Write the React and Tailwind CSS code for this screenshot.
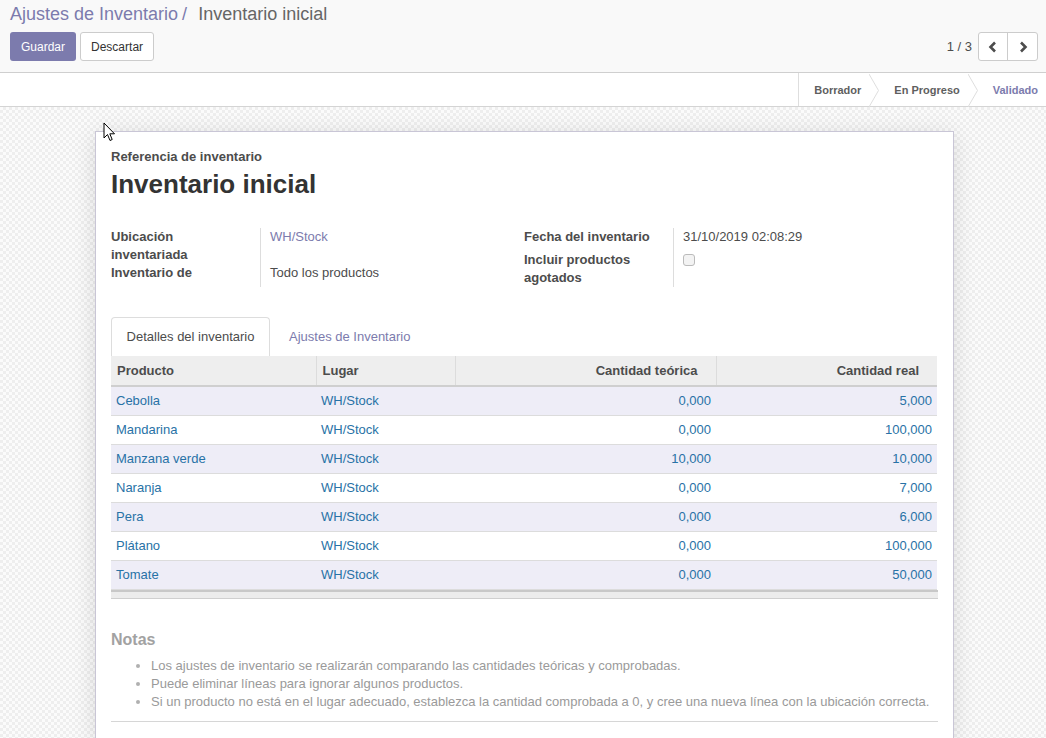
import React from "react";

const rows = [
  ["Cebolla", "WH/Stock", "0,000", "5,000"],
  ["Mandarina", "WH/Stock", "0,000", "100,000"],
  ["Manzana verde", "WH/Stock", "10,000", "10,000"],
  ["Naranja", "WH/Stock", "0,000", "7,000"],
  ["Pera", "WH/Stock", "0,000", "6,000"],
  ["Plátano", "WH/Stock", "0,000", "100,000"],
  ["Tomate", "WH/Stock", "0,000", "50,000"],
];

function Chev({ dir }) {
  return (
    <svg width="10" height="12" viewBox="0 0 10 12">
      {dir === "left" ? (
        <path d="M7 1.5 L2.5 6 L7 10.5" fill="none" stroke="#4c4c4c" strokeWidth="2.6" />
      ) : (
        <path d="M3 1.5 L7.5 6 L3 10.5" fill="none" stroke="#4c4c4c" strokeWidth="2.6" />
      )}
    </svg>
  );
}

function Sep() {
  return (
    <svg width="10" height="33" viewBox="0 0 10 33" className="shrink-0">
      <path d="M0 0 L9.5 16.5 L0 33" fill="none" stroke="#dedede" strokeWidth="1" />
    </svg>
  );
}

export default function App() {
  return (
    <div
      className="relative w-[1046px] h-[738px] overflow-hidden text-[13px] text-[#4c4c4c] flex flex-col"
      style={{ fontFamily: '"Liberation Sans", Arial, sans-serif' }}
    >
      {/* Control panel */}
      <div className="bg-[#f9f9f9] border-b border-[#cfcfcf] h-[73px] shrink-0 pl-[10px] pr-[8px] pt-[3px]">
        <div className="text-[18px] leading-[22px] flex items-center">
          <span className="text-[#7c7bad]">Ajustes de Inventario</span>
          <span className="text-[#7c7bad] ml-[4px]">/</span>
          <span className="text-[#666] ml-[11px]">Inventario inicial</span>
        </div>
        <div className="flex items-center mt-[7px]">
          <button className="h-[29px] px-[11px] rounded-[3px] bg-[#7c7bad] text-white text-[12px]">Guardar</button>
          <button className="h-[29px] px-[10px] ml-[4px] rounded-[3px] bg-white border border-[#ccc] text-[#333] text-[12px]">
            Descartar
          </button>
          <div className="flex-1" />
          <span className="text-[13px] text-[#4c4c4c] mr-[6px]">1 / 3</span>
          <div className="flex h-[29px] border border-[#ccc] rounded-[3px] bg-white">
            <div className="w-[29px] flex items-center justify-center border-r border-[#ccc]">
              <Chev dir="left" />
            </div>
            <div className="w-[29px] flex items-center justify-center">
              <Chev dir="right" />
            </div>
          </div>
        </div>
      </div>

      {/* Statusbar */}
      <div className="bg-white border-b border-[#d4d4d4] h-[34px] shrink-0 flex justify-end">
        <div className="flex items-center border-l border-[#dedede] text-[11px] font-bold h-[33px] pt-[1px]">
          <span className="pl-[15px] pr-[8px] text-[#5f5f5f]">Borrador</span>
          <Sep />
          <span className="pl-[15px] pr-[8px] text-[#5f5f5f]">En Progreso</span>
          <Sep />
          <span className="pl-[15px] pr-[8px] text-[#7c7bad]">Validado</span>
        </div>
      </div>

      {/* Content */}
      <div className="flex-1 bg-[repeating-conic-gradient(#eeeeee_0_25%,#fbfbfb_0_50%)] bg-size-[6px_6px] pt-[24px] pl-[95px]">
        <div className="w-[859px] bg-white border border-[#c9c6d6] shadow-[0_4px_22px_rgba(0,0,0,0.12)] px-[15px] pt-[16px] pb-[17px]">
          <div className="font-bold text-[13px] leading-[18px]">Referencia de inventario</div>
          <div className="font-bold text-[26px] leading-[36px] text-[#333]">Inventario inicial</div>

          {/* field groups */}
          <div className="flex mt-[26px]">
            <div className="w-[413px] flex">
              <div className="w-[150px] border-r border-[#ddd] font-bold leading-[18px]">
                <div className="h-[36px]">Ubicación<br />inventariada</div>
                <div className="h-[23px]">Inventario de</div>
              </div>
              <div className="pl-[9px] leading-[18px]">
                <div className="h-[36px] text-[#7c7bad]">WH/Stock</div>
                <div className="h-[23px]">Todo los productos</div>
              </div>
            </div>
            <div className="w-[413px] flex">
              <div className="w-[150px] border-r border-[#ddd] font-bold leading-[18px]">
                <div className="h-[23px]">Fecha del inventario</div>
                <div className="h-[36px]">Incluir productos<br />agotados</div>
              </div>
              <div className="pl-[9px] leading-[18px]">
                <div className="h-[23px]">31/10/2019 02:08:29</div>
                <div className="h-[36px] pt-[3px]">
                  <div className="w-[12px] h-[12px] rounded-[3px] border border-[#bbb] bg-[#f3f3f3]" />
                </div>
              </div>
            </div>
          </div>

          {/* tabs */}
          <div className="flex mt-[30px] h-[39px] items-end">
            <div className="h-[39px] w-[159px] border border-[#ddd] border-b-0 rounded-t-[4px] flex items-center justify-center text-[#4c4c4c]">
              Detalles del inventario
            </div>
            <div className="h-[39px] flex items-center px-[19px] text-[#7c7bad]">Ajustes de Inventario</div>
          </div>

          {/* table */}
          <table className="w-[826px] border-collapse table-fixed">
            <colgroup>
              <col className="w-[205px]" />
              <col className="w-[139px]" />
              <col className="w-[261px]" />
              <col className="w-[221px]" />
            </colgroup>
            <thead>
              <tr className="bg-[#eeeeee] h-[30px] border-b-2 border-[#cfcfcf] font-bold">
                <th className="text-left font-bold px-[6px] border-r border-[#dcdcdc]">Producto</th>
                <th className="text-left font-bold px-[6px] border-r border-[#dcdcdc]">Lugar</th>
                <th className="text-right font-bold px-[18px] border-r border-[#dcdcdc]">Cantidad teórica</th>
                <th className="text-right font-bold px-[18px]">Cantidad real</th>
              </tr>
            </thead>
            <tbody className="text-[#2872a6]">
              {rows.map((r, i) => (
                <tr key={i} className={`h-[29px] border-b border-[#dcdcdc] ${i % 2 === 0 ? "bg-[#eeedf7]" : "bg-white"}`}>
                  <td className="px-[5px]">{r[0]}</td>
                  <td className="px-[5px]">{r[1]}</td>
                  <td className="px-[5px] text-right">{r[2]}</td>
                  <td className="px-[5px] text-right">{r[3]}</td>
                </tr>
              ))}
            </tbody>
          </table>
          <div className="h-[9px] bg-[#ececec] border-t-2 border-[#c8c8c8] border-b border-b-[#cfcfcf]" />

          {/* notes */}
          <div className="mt-[32px] text-[16px] font-bold text-[#a2a2a2] leading-[18px]">Notas</div>
          <ul className="mt-[8px] pl-[40px] list-disc text-[13px] leading-[18px] text-[#9a9a9a] marker:text-[#b0b0b0]">
            <li>Los ajustes de inventario se realizarán comparando las cantidades teóricas y comprobadas.</li>
            <li>Puede eliminar líneas para ignorar algunos productos.</li>
            <li>Si un producto no está en el lugar adecuado, establezca la cantidad comprobada a 0, y cree una nueva línea con la ubicación correcta.</li>
          </ul>
          <div className="mt-[10px] border-t border-[#d6d6d6]" />
        </div>
      </div>

      {/* mouse cursor */}
      <svg className="absolute left-[103px] top-[122px]" width="13" height="20" viewBox="0 0 13 20">
        <path d="M1 1 L1 16 L4.5 12.5 L7 18.5 L9.2 17.5 L6.8 11.8 L11.5 11.8 Z" fill="#fff" stroke="#000" strokeWidth="1" strokeLinejoin="round" />
      </svg>
    </div>
  );
}
